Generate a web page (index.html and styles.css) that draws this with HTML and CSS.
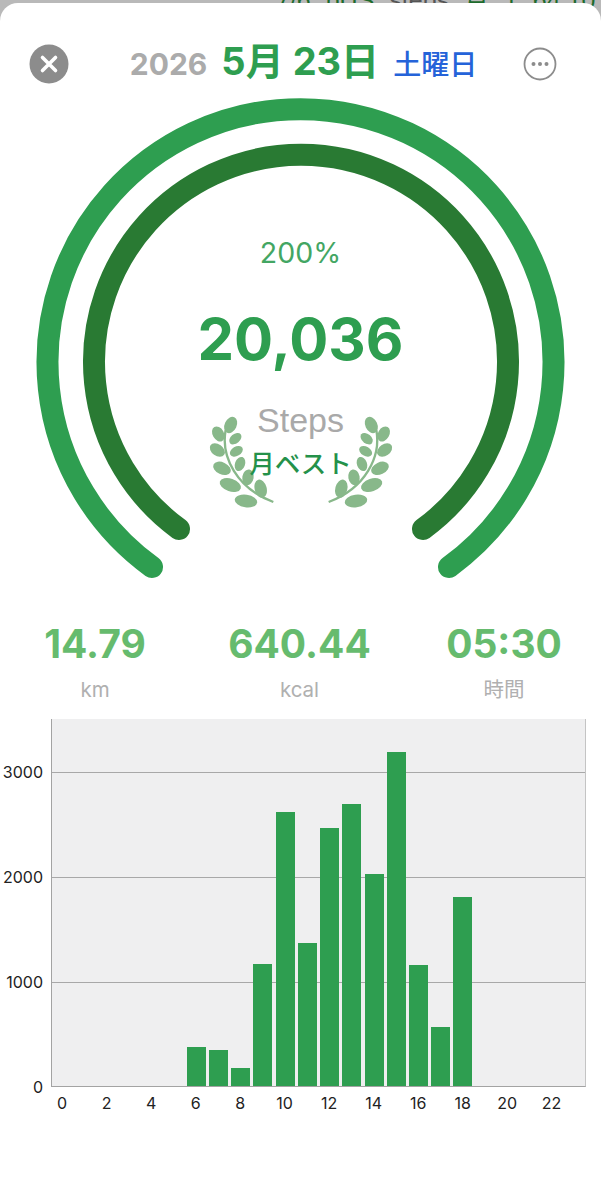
FILE: index.html
```html
<!DOCTYPE html>
<html lang="ja">
<head>
  <meta charset="UTF-8">
  <meta name="viewport" content="width=device-width, initial-scale=1.0">
  <title>Steps - 5月 23日</title>
  <link rel="stylesheet" href="styles.css">
</head>
<body>
  <div class="behind">
    <span class="behind-text">7/6 bUS <span class="behind-muted">steps</span> 月 1 64.10</span>
  </div>

  <div class="sheet">
    <header class="header">
      <svg class="close" width="40" height="40" viewBox="0 0 40 40">
        <circle cx="20" cy="20" r="19.5" fill="#8c8c8c"/>
        <path d="M13.5 13.5 L26.5 26.5 M26.5 13.5 L13.5 26.5" stroke="#fff" stroke-width="3.6" stroke-linecap="round"/>
      </svg>
      <div class="date">
        <span class="year">2026</span>
        <span class="day">5月 23日</span>
        <span class="weekday">土曜日</span>
      </div>
      <svg class="more" width="34" height="34" viewBox="0 0 34 34">
        <circle cx="17" cy="17" r="15.5" fill="none" stroke="#8c8c8c" stroke-width="1.8"/>
        <circle cx="10.5" cy="17" r="2" fill="#8c8c8c"/>
        <circle cx="17" cy="17" r="2" fill="#8c8c8c"/>
        <circle cx="23.5" cy="17" r="2" fill="#8c8c8c"/>
      </svg>
    </header>

    <div class="gauge">
      <svg class="rings" width="601" height="510" viewBox="0 90 601 510">
        <path d="M152 567 A253 253 0 1 1 449 567" fill="none" stroke="#2e9e50" stroke-width="22" stroke-linecap="round"/>
        <path d="M179 529 A207 207 0 1 1 423 529" fill="none" stroke="#297a33" stroke-width="22" stroke-linecap="round"/>
        <g transform="translate(190 390) scale(0.3333)">
          <g id="laurel" fill="#88b88a">
            <path d="M107 120 C92 200 140 295 250 336" fill="none" stroke="#88b88a" stroke-width="7"/>
            <ellipse cx="122" cy="105" rx="18" ry="26" transform="rotate(25 122 105)"/>
            <ellipse cx="85" cy="132" rx="17" ry="24" transform="rotate(-30 85 132)"/>
            <ellipse cx="136" cy="146" rx="14" ry="21" transform="rotate(50 136 146)"/>
            <ellipse cx="82" cy="180" rx="17" ry="25" transform="rotate(-55 82 180)"/>
            <ellipse cx="139" cy="184" rx="14" ry="21" transform="rotate(60 139 184)"/>
            <ellipse cx="96" cy="235" rx="18" ry="28" transform="rotate(-65 96 235)"/>
            <ellipse cx="150" cy="222" rx="15" ry="22" transform="rotate(20 150 222)"/>
            <ellipse cx="121" cy="285" rx="19" ry="33" transform="rotate(-72 121 285)"/>
            <ellipse cx="174" cy="262" rx="17" ry="24" transform="rotate(10 174 262)"/>
            <ellipse cx="212" cy="296" rx="18" ry="28" transform="rotate(-15 212 296)"/>
            <ellipse cx="168" cy="333" rx="19" ry="34" transform="rotate(-82 168 333)"/>
          </g>
          <use href="#laurel" transform="translate(666 0) scale(-1 1)"/>
        </g>
      </svg>
      <div class="percent">200%</div>
      <div class="count">20,036</div>
      <div class="unit">Steps</div>
      <div class="badge">月ベスト</div>
    </div>

    <div class="stats">
      <div class="stat"><div class="stat-value">14.79</div><div class="stat-label">km</div></div>
      <div class="stat"><div class="stat-value">640.44</div><div class="stat-label">kcal</div></div>
      <div class="stat"><div class="stat-value">05:30</div><div class="stat-label">時間</div></div>
    </div>

    <div class="chart">
      <div class="y-axis">
        <span>3000</span>
        <span>2000</span>
        <span>1000</span>
        <span>0</span>
      </div>
      <div class="plot">
        <div class="grid-row"></div>
        <div class="grid-row"></div>
        <div class="grid-row"></div>
        <div class="bars">
          <i></i><i></i><i></i><i></i><i></i><i></i>
          <i style="height:39px"></i>
          <i style="height:36px"></i>
          <i style="height:18px"></i>
          <i style="height:122px"></i>
          <i style="height:274px"></i>
          <i style="height:143px"></i>
          <i style="height:258px"></i>
          <i style="height:282px"></i>
          <i style="height:212px"></i>
          <i style="height:334px"></i>
          <i style="height:121px"></i>
          <i style="height:59px"></i>
          <i style="height:189px"></i>
          <i></i><i></i><i></i><i></i><i></i>
        </div>
      </div>
      <div class="x-axis">
        <span>0</span><span>2</span><span>4</span><span>6</span><span>8</span><span>10</span>
        <span>12</span><span>14</span><span>16</span><span>18</span><span>20</span><span>22</span>
      </div>
    </div>
  </div>
</body>
</html>
```

FILE: styles.css
```css
html, body { margin: 0; padding: 0; }
body {
  width: 601px; height: 1200px; overflow: hidden;
  background: #b9b9b9;
  font-family: Inter, "Noto Sans CJK JP", sans-serif;
  position: relative;
}

.behind { position: absolute; top: -20px; left: 240px; font-family: "Liberation Sans", "Noto Sans CJK JP", sans-serif; font-size: 25px; word-spacing: 8px; color: #1d6b2c; white-space: nowrap; }
.behind-text { margin-left: 36px; }
.behind-muted { color: #555; }

.sheet {
  position: absolute; top: 3px; left: 0; right: 0; bottom: 0;
  background: #fff;
  border-radius: 18px 18px 0 0;
}

.header { display: flex; align-items: center; height: 40px; padding: 41px 44px 0 29px; }
.close, .more { flex: none; }
.date { flex: 1; display: flex; justify-content: center; align-items: baseline; gap: 14px; margin-bottom: 12px; padding-left: 15px; white-space: nowrap; font-weight: bold; }
.year { font-size: 30px; color: #ababab; }
.day { font-size: 38px; color: #2e9e50; }
.weekday { font-size: 28px; color: #2563d9; font-weight: 500; }

.gauge { position: relative; height: 510px; margin-top: 6px; }
.rings { display: block; }
.percent, .count, .unit, .badge { position: absolute; left: 0; right: 0; text-align: center; }
.percent { top: 145px; font-size: 28.5px; color: #43a663; }
.count { top: 211px; font-size: 58px; font-weight: bold; color: #2e9e50; line-height: 76px; }
.unit { top: 311px; font-family: "Liberation Sans", sans-serif; font-size: 34px; color: #a9a9a9; }
.badge { top: 353px; font-size: 25.5px; font-weight: 500; color: #24914a; }

.stats { display: grid; grid-template-columns: repeat(3, 190px); justify-content: space-between; width: 599px; margin-top: 18px; text-align: center; }
.stat-value { font-size: 39px; font-weight: bold; color: #66bb6e; line-height: 52px; }
.stat-label { font-size: 20.5px; color: #b0b0b0; margin-top: 7px; line-height: 26px; }

.chart { display: grid; grid-template-columns: 51px 535px; margin-top: 16px; }
.y-axis { height: 368px; display: flex; flex-direction: column; align-items: flex-end; padding-right: 8px; padding-top: 43px; box-sizing: border-box; font-size: 16px; color: #222; }
.y-axis span { flex: none; height: 105px; line-height: 20px; }
.plot {
  position: relative; height: 368px; padding-top: 53px; box-sizing: border-box;
  background: #efeff0;
  border-left: 1.5px solid #a3a3a3;
  border-bottom: 1.5px solid #a3a3a3;
  border-right: 1px solid #c4c4c4;
}
.grid-row { height: 105px; box-sizing: border-box; border-top: 1px solid #a8a8a8; }
.bars {
  position: absolute; left: 0; right: 0; bottom: 0; height: 100%;
  display: grid; grid-template-columns: repeat(24, 1fr); align-items: end;
}
.bars i { display: block; margin: 0 1.6px; background: #2e9e50; }
.x-axis { grid-column: 2; display: grid; grid-template-columns: repeat(12, 44.5px); margin-top: 6px; font-size: 16px; color: #222; }
.x-axis span { width: 22.25px; text-align: center; }
```
